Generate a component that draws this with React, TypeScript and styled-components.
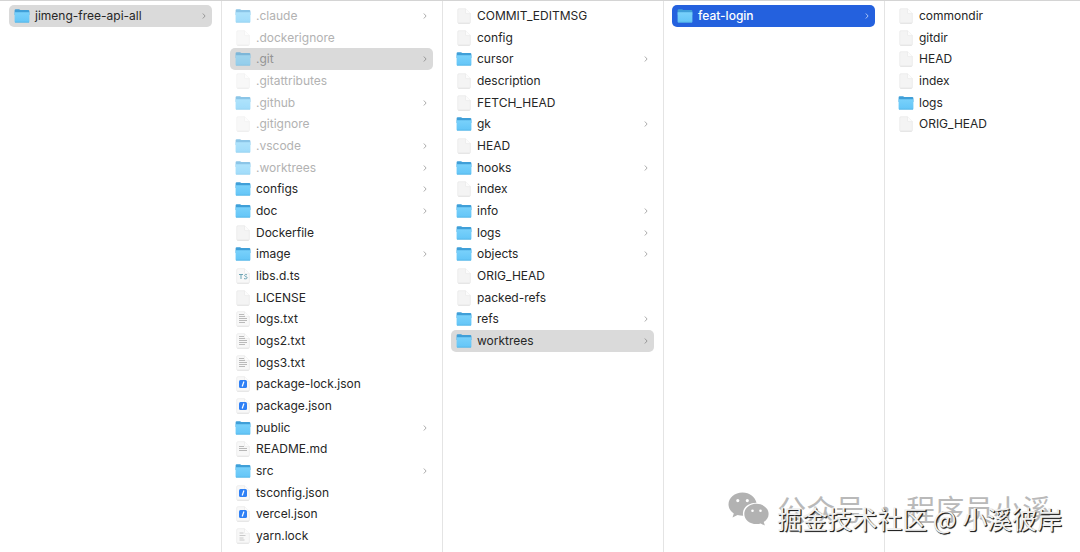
import React, { useId } from 'react';
import styled, { createGlobalStyle } from 'styled-components';

type Kind = 'folder' | 'blank' | 'text' | 'json' | 'ts' | 'lock' | 'md';
type Selection = 'none' | 'path' | 'active';

interface Entry {
  name: string;
  kind: Kind;
  hidden?: boolean;
  selection?: Selection;
}

const GlobalStyle = createGlobalStyle`
  * { box-sizing: border-box; }
  body { margin: 0; background: #fff; }
`;

const Browser = styled.main`
  position: relative;
  display: flex;
  min-height: 100vh;
  overflow: hidden;
  border-top: 1px solid #d4d4d4;
  background: #fff;
  color: #262626;
  font: 12px/16px Inter, "Liberation Sans", sans-serif;
`;

const Column = styled.ul`
  display: grid;
  flex: 0 0 221px;
  grid-template-rows: repeat(25, minmax(21px, 1fr));
  margin: 0;
  padding: 4px 9px 5px 8px;
  border-left: 1px solid #e4e4e4;
  list-style: none;

  &:first-child {
    border-left-color: transparent;
  }

  &:last-of-type {
    flex-grow: 1;
  }
`;

const Item = styled.li`
  display: flex;
`;

const rowColors = {
  none: { background: 'transparent', chevron: '#adadad' },
  path: { background: '#dadada', chevron: '#999' },
  active: { background: '#2461de', chevron: '#a9c4f7' },
};

const Row = styled.button<{ $selection: Selection; $hidden: boolean }>`
  display: flex;
  flex: 1;
  align-items: center;
  gap: 5px;
  min-width: 0;
  padding: 0 5px;
  border: 0;
  border-radius: 5px;
  background: ${({ $selection }) => rowColors[$selection].background};
  color: ${({ $selection, $hidden }) =>
    $selection === 'active' ? '#fff' : !$hidden ? 'inherit' : $selection === 'path' ? '#949494' : '#b2b2b2'};
  font: inherit;
  font-weight: ${({ $selection }) => ($selection === 'active' ? 500 : 400)};
  text-align: left;
`;

const Icon = styled.svg<{ $faded: boolean }>`
  flex: none;
  width: 16px;
  height: 16px;
  opacity: ${({ $faded }) => ($faded ? 0.6 : 1)};
`;

const Name = styled.span`
  flex: 1;
  white-space: nowrap;
`;

const Chevron = styled.svg<{ $selection: Selection }>`
  flex: none;
  width: 6px;
  height: 8px;
  fill: none;
  stroke: ${({ $selection }) => rowColors[$selection].chevron};
`;

const Watermark = styled.div`
  position: absolute;
  right: 18px;
  bottom: 20px;
  display: grid;
  grid-template-columns: 41px auto;
  column-gap: 8px;
  pointer-events: none;
  font-family: "Noto Sans CJK SC", sans-serif;
  white-space: nowrap;
`;

const WeChatLogo = styled.svg`
  grid-area: 1 / 1;
  width: 41px;
  height: 34px;
`;

const Account = styled.span`
  grid-area: 1 / 2;
  color: #b9b9b9;
  font-size: 29px;
  font-weight: 400;
  line-height: 32px;
`;

const Community = styled.span`
  grid-area: 1 / 2;
  margin-top: 12px;
  color: #f0f0f0;
  font-size: 25px;
  line-height: 28px;
  text-shadow: 1px 1px 1px #222, 1px 1px 0 #333;
`;

function FileIcon({ kind, faded }: { kind: Kind; faded: boolean }) {
  const id = useId();
  if (kind === 'folder') {
    return (
      <Icon viewBox="0 0 16 16" $faded={faded} aria-hidden="true">
        <defs>
          <linearGradient id={id} x1="0" y1="0" x2="0" y2="1">
            <stop offset="0" stopColor="#79d1fb" />
            <stop offset="1" stopColor="#63c5f7" />
          </linearGradient>
        </defs>
        <path d="M.6 2.400a1.200 1.200 0 0 1 1.200-1.200h3.200c.8 0 1 .9 1.900.9h7.300A1.200 1.200 0 0 1 15.400 3.300V7H.6z" fill="#3f9fd8" />
        <path d="M.6 4.200h14.800v9.200a1.200 1.200 0 0 1-1.200 1.200H1.800a1.200 1.200 0 0 1-1.200-1.200z" fill={`url(#${id})`} />
        <path d="M1 14.200h14" stroke="#4fb0e4" strokeWidth=".7" />
      </Icon>
    );
  }
  return (
    <Icon viewBox="0 0 16 16" $faded={faded} aria-hidden="true">
      <path
        d="M2.700.700h6.800l4.900 4.900v8.600a1 1 0 0 1-1 1H2.700a1 1 0 0 1-1-1V1.700a1 1 0 0 1 1-1z"
        fill={kind === 'blank' ? '#f4f4f4' : '#f8f8f8'}
        stroke="#e9e9e9"
        strokeWidth=".7"
      />
      <path d="M9.500.700v3.900a1 1 0 0 0 1 1h3.900" fill="#fcfcfc" stroke="#e8e8e8" strokeWidth=".6" />
      <path d="M2.300 15.300h11.500" stroke="#d8d8d8" strokeWidth=".6" />
      {kind === 'text' && <path d="M4 3.500h5M4 5.500h6M4 7.500h8M4 9.500h8M4 11.500h6" stroke="#bababa" />}
      {kind === 'md' && <path d="M4 5.500h5M4 7.500h8M4 9.500h8" stroke="#b8b8b8" />}
      {kind === 'lock' && <path d="M4.500 5h4M4.500 7.500h6M4.500 10h4M4.500 12h5" stroke="#bdbdbd" strokeWidth=".8" />}
      {kind === 'json' && (
        <>
          <rect x="4" y="4" width="8" height="8" rx="1.500" fill="#2f80f5" />
          <path d="M8.900 5.500 7.200 10.500" stroke="#fff" strokeWidth="1.200" />
        </>
      )}
      {kind === 'ts' && <path d="M4 6.500h4M6 6.500v4.500M12 6.800c-3-1-3 1.600-1 1.900s1.500 2.900-2 1.900" fill="none" stroke="#6da5b5" />}
    </Icon>
  );
}

const folder = (name: string, extra: Partial<Entry> = {}): Entry => ({ name, kind: 'folder', ...extra });
const file = (name: string, kind: Kind = 'blank', extra: Partial<Entry> = {}): Entry => ({ name, kind, ...extra });
const hidden = { hidden: true };

const columns: { label: string; entries: Entry[] }[] = [
  { label: 'Projects', entries: [folder('jimeng-free-api-all', { selection: 'path' })] },
  {
    label: 'jimeng-free-api-all',
    entries: [
      folder('.claude', hidden),
      file('.dockerignore', 'blank', hidden),
      folder('.git', { hidden: true, selection: 'path' }),
      file('.gitattributes', 'blank', hidden),
      folder('.github', hidden),
      file('.gitignore', 'blank', hidden),
      folder('.vscode', hidden),
      folder('.worktrees', hidden),
      folder('configs'),
      folder('doc'),
      file('Dockerfile'),
      folder('image'),
      file('libs.d.ts', 'ts'),
      file('LICENSE'),
      file('logs.txt', 'text'),
      file('logs2.txt', 'text'),
      file('logs3.txt', 'text'),
      file('package-lock.json', 'json'),
      file('package.json', 'json'),
      folder('public'),
      file('README.md', 'md'),
      folder('src'),
      file('tsconfig.json', 'json'),
      file('vercel.json', 'json'),
      file('yarn.lock', 'lock'),
    ],
  },
  {
    label: '.git',
    entries: [
      file('COMMIT_EDITMSG'),
      file('config'),
      folder('cursor'),
      file('description'),
      file('FETCH_HEAD'),
      folder('gk'),
      file('HEAD'),
      folder('hooks'),
      file('index'),
      folder('info'),
      folder('logs'),
      folder('objects'),
      file('ORIG_HEAD'),
      file('packed-refs'),
      folder('refs'),
      folder('worktrees', { selection: 'path' }),
    ],
  },
  { label: 'worktrees', entries: [folder('feat-login', { selection: 'active' })] },
  {
    label: 'feat-login',
    entries: [file('commondir'), file('gitdir'), file('HEAD'), file('index'), folder('logs'), file('ORIG_HEAD')],
  },
];

function EntryRow({ entry }: { entry: Entry }) {
  const selection = entry.selection ?? 'none';
  const faded = Boolean(entry.hidden);
  return (
    <Item>
      <Row type="button" $selection={selection} $hidden={faded}>
        <FileIcon kind={entry.kind} faded={faded} />
        <Name>{entry.name}</Name>
        {entry.kind === 'folder' && (
          <Chevron viewBox="0 0 6 8" $selection={selection} aria-hidden="true">
            <path d="M1.800 1.500 4.100 4 1.800 6.500" />
          </Chevron>
        )}
      </Row>
    </Item>
  );
}

export default function App() {
  return (
    <>
      <GlobalStyle />
      <Browser>
        {columns.map((column) => (
          <Column key={column.label} aria-label={column.label}>
            {column.entries.map((entry) => (
              <EntryRow key={entry.name} entry={entry} />
            ))}
          </Column>
        ))}
        <Watermark>
          <WeChatLogo viewBox="0 0 41 34" aria-hidden="true">
            <path
              fillRule="evenodd"
              d="M14.500.500C6.700.500.5 5.700.5 12.300c0 3.800 2 7 5.300 9.200L4.500 25.500l5-2.500c1.700.5 3.500.8 5.700.8-1.700-7.300 4.600-13.100 13.300-13C27.300 4.800 21.500.500 14.500.500zM9.800 7a1.600 1.600 0 1 1 0 3.200 1.600 1.600 0 0 1 0-3.200zm9.500 0a1.600 1.600 0 1 1 0 3.200 1.600 1.600 0 0 1 0-3.200z"
              fill="#b2b2b2"
            />
            <path
              fillRule="evenodd"
              d="M28.500 11.800c-6.800 0-12.200 4.500-12.200 10.100s5.400 10.100 12.200 10.100c1.500 0 2.900-.2 4.200-.6l4.200 2.200-1.200-3.600c3-1.900 4.900-4.800 4.900-8.100 0-5.600-5.300-10.100-12.100-10.100zm-4 5.600a1.300 1.300 0 1 1 0 2.600 1.300 1.300 0 0 1 0-2.600zm8 0a1.300 1.300 0 1 1 0 2.600 1.300 1.300 0 0 1 0-2.600z"
              fill="#b2b2b2"
            />
          </WeChatLogo>
          <Account>公众号 · 程序员小溪</Account>
          <Community>掘金技术社区 @ 小溪彼岸</Community>
        </Watermark>
      </Browser>
    </>
  );
}
